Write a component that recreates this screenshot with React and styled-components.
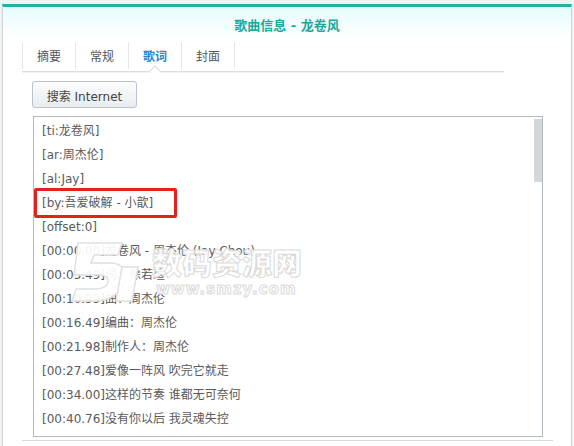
import styled, { createGlobalStyle } from "styled-components";

const GlobalStyle = createGlobalStyle`
  html, body {
    margin: 0;
    padding: 0;
    background: #f1f2f3;
    font-family: "DejaVu Sans", Verdana, "Noto Sans CJK SC", sans-serif;
  }
`;

const tabs = ["摘要", "常规", "歌词", "封面"];
const active = 2;

const lyrics = [
  "[ti:龙卷风]",
  "[ar:周杰伦]",
  "[al:Jay]",
  "[by:吾爱破解 - 小歆]",
  "[offset:0]",
  "[00:00.00]龙卷风 - 周杰伦 (Jay Chou)",
  "[00:05.49]词：徐若瑄",
  "[00:10.99]曲：周杰伦",
  "[00:16.49]编曲：周杰伦",
  "[00:21.98]制作人：周杰伦",
  "[00:27.48]爱像一阵风 吹完它就走",
  "[00:34.00]这样的节奏 谁都无可奈何",
  "[00:40.76]没有你以后 我灵魂失控",
];

export default function App() {
  return (
    <>
      <GlobalStyle />
      <Page>
        <Window>
          <Title>歌曲信息 - 龙卷风</Title>
          <Body>
            <Tabs>
              {tabs.map((t, i) => (
                <Tab key={t} $active={i === active}>
                  {t}
                </Tab>
              ))}
            </Tabs>
            <Button>搜索 Internet</Button>
            <LyricsBox>
              {lyrics.map((l, i) => (
                <Line key={i} $marked={i === 3}>
                  {l}
                </Line>
              ))}
              <Thumb />
              <Watermark>
                <Logo viewBox="0 0 80 64">
                  <path
                    d="M14 4 H58 L54 16 H30 L27 24 H46 C60 24 64 34 60 44 C56 56 44 62 30 62 H8 L12 50 H32 C40 50 44 46 44 42 C44 38 40 36 34 36 H10 Z"
                    fill="rgba(255,255,255,0.92)"
                    stroke="#e0e0e0"
                    strokeWidth="1.5"
                  />
                  <path
                    d="M58 28 L74 28 L68 62 L52 62 Z"
                    fill="rgba(255,255,255,0.92)"
                    stroke="#e0e0e0"
                    strokeWidth="1.5"
                  />
                </Logo>
                <WmText>
                  <WmBig>数码资源网</WmBig>
                  <WmSmall>www.smzy.com</WmSmall>
                </WmText>
              </Watermark>
            </LyricsBox>
          </Body>
          <Footer />
        </Window>
      </Page>
    </>
  );
}

const Page = styled.div`
  width: 574px;
  height: 446px;
  overflow: hidden;
  padding: 4px 2px 0 2px;
  box-sizing: border-box;
`;

const Window = styled.div`
  height: 100%;
  background: #fff;
  border-top: 3px solid #22b2a2;
  border-left: 1px solid #cfd3d6;
  border-right: 1px solid #cfd3d6;
  box-sizing: border-box;
`;

const Title = styled.div`
  height: 33px;
  display: flex;
  align-items: center;
  justify-content: center;
  background: linear-gradient(#e6fbfb, #ffffff);
  color: #1aa99b;
  font-size: 13px;
  font-weight: bold;
  padding-top: 1px;
  box-sizing: border-box;
`;

const Body = styled.div`
  padding: 0 0 0 19px;
`;

const Tabs = styled.div`
  display: flex;
  width: 482px;
  height: 31px;
  border-bottom: 1px solid #d9dde0;
  box-shadow: 0 1px 0 #f0f2f3;
`;

const Tab = styled.div`
  position: relative;
  width: 52px;
  height: 27px;
  margin-top: 2px;
  display: flex;
  align-items: center;
  justify-content: center;
  font-size: 12px;
  color: ${(p) => (p.$active ? "#2b88d2" : "#555")};
  font-weight: ${(p) => (p.$active ? "bold" : "normal")};
  border-left: 1px solid #e4e6e8;
  &:last-child {
    border-right: 1px solid #e4e6e8;
  }
  ${(p) =>
    p.$active &&
    `
    &::after {
      content: "";
      position: absolute;
      left: 22px;
      bottom: -6px;
      width: 7px;
      height: 7px;
      background: #fff;
      border-top: 1px solid #d9dde0;
      border-left: 1px solid #d9dde0;
      transform: rotate(45deg);
    }
  `}
`;

const Button = styled.div`
  display: flex;
  align-items: center;
  justify-content: center;
  margin: 9px 0 0 10px;
  width: 105px;
  height: 27px;
  box-sizing: border-box;
  border: 1px solid #b9c3cb;
  border-radius: 3px;
  background: linear-gradient(#fbfcfd, #e9edf0);
  font-size: 12px;
  color: #444;
  padding-top: 1px;
`;

const LyricsBox = styled.div`
  position: relative;
  margin: 8px 0 0 11px;
  width: 510px;
  height: 321px;
  box-sizing: border-box;
  border: 1px solid #b3babf;
  padding: 2px 0 0 8px;
  overflow: hidden;
`;

const Line = styled.div`
  height: 24px;
  line-height: 24px;
  font-size: 12px;
  color: #5a5a5a;
  white-space: nowrap;
  position: relative;
  ${(p) =>
    p.$marked &&
    `
    &::before {
      content: "";
      position: absolute;
      left: -8px;
      top: -3px;
      width: 143px;
      height: 30px;
      box-sizing: border-box;
      border: 3px solid #e0231e;
      border-radius: 2px;
    }
  `}
`;

const Thumb = styled.div`
  position: absolute;
  top: 2px;
  right: 0;
  width: 8px;
  height: 63px;
  background: #d4d6d8;
`;

const Watermark = styled.div`
  position: absolute;
  left: 30px;
  top: 122px;
  display: flex;
  align-items: flex-start;
  gap: 8px;
  pointer-events: none;
`;

const Logo = styled.svg`
  width: 80px;
  height: 64px;
`;

const WmText = styled.div`
  display: flex;
  flex-direction: column;
  padding-top: 4px;
`;

const WmBig = styled.div`
  font-family: "Noto Sans CJK SC", sans-serif;
  font-size: 30px;
  font-weight: 900;
  line-height: 36px;
  color: rgba(255, 255, 255, 0.92);
  -webkit-text-stroke: 1px #dadada;
`;

const WmSmall = styled.div`
  font-family: "DejaVu Sans", sans-serif;
  font-size: 15px;
  font-weight: bold;
  letter-spacing: 1px;
  line-height: 20px;
  color: rgba(255, 255, 255, 0.92);
  -webkit-text-stroke: 1px #dadada;
  margin-left: 4px;
`;

const Footer = styled.div`
  margin: 3px 0 0 19px;
  width: 531px;
  border-top: 1px solid #d6d9dc;
`;
